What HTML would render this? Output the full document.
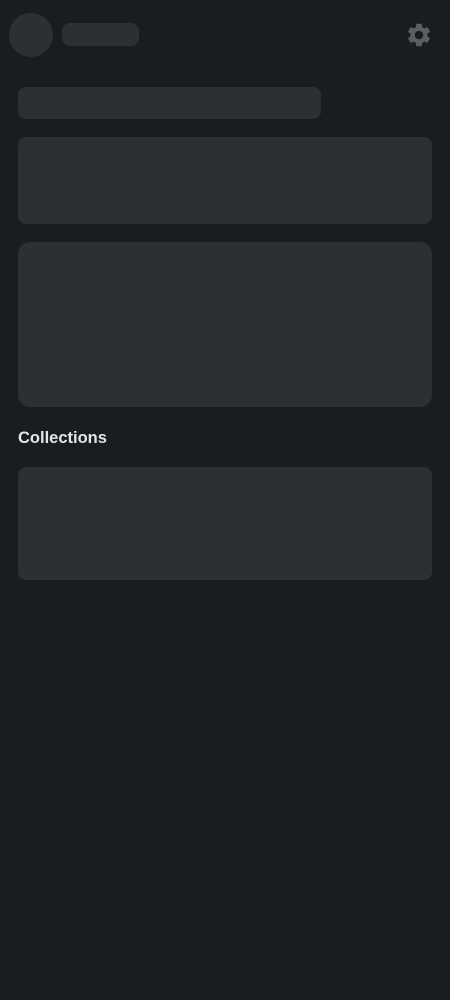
<!DOCTYPE html>
<html><head><style>
html,body{margin:0;padding:0;background:#1a1d20;width:450px;height:1000px;overflow:hidden;font-family:"Liberation Sans",sans-serif}
.b{position:absolute;background:#2c3033}
</style></head><body>
<div class="b" style="left:9px;top:13px;width:44px;height:44px;border-radius:50%"></div>
<div class="b" style="left:62px;top:23px;width:77px;height:23px;border-radius:8px"></div>
<svg style="position:absolute;left:405px;top:21px" width="28" height="28" viewBox="0 0 24 24"><path fill="#5b5f63" d="M19.14 12.94c.04-.3.06-.61.06-.94 0-.32-.02-.64-.07-.94l2.030-1.58a.49.49 0 0 0 .12-.61l-1.92-3.32a.488.488 0 0 0-.59-.22l-2.39.96c-.5-.38-1.03-.7-1.62-.94l-.36-2.54a.484.484 0 0 0-.48-.41h-3.84c-.24 0-.43.17-.47.41l-.36 2.54c-.59.24-1.13.57-1.62.94l-2.39-.96c-.22-.08-.47 0-.59.22L2.74 8.870c-.12.21-.08.47.12.61l2.03 1.58c-.05.3-.09.63-.09.94s.02.64.07.94l-2.03 1.58a.49.49 0 0 0-.12.61l1.92 3.32c.12.22.37.29.59.22l2.39-.96c.5.38 1.03.7 1.62.94l.36 2.54c.05.24.24.41.48.41h3.84c.24 0 .44-.17.47-.41l.36-2.54c.59-.24 1.13-.56 1.62-.94l2.39.96c.22.08.47 0 .59-.22l1.92-3.32c.12-.22.07-.47-.12-.61l-2.01-1.58zM12 15.6c-1.98 0-3.6-1.62-3.6-3.6s1.62-3.6 3.6-3.6 3.6 1.62 3.6 3.6-1.62 3.6-3.6 3.6z"/></svg>
<div class="b" style="left:18px;top:87px;width:303px;height:32px;border-radius:8px"></div>
<div class="b" style="left:18px;top:137px;width:414px;height:87px;border-radius:8px"></div>
<div class="b" style="left:18px;top:242px;width:414px;height:165px;border-radius:12px"></div>
<div style="position:absolute;left:18px;top:429px;font-size:16.5px;font-weight:bold;color:#e4e5e6">Collections</div>
<div class="b" style="left:18px;top:467px;width:414px;height:113px;border-radius:8px"></div>
</body></html>
